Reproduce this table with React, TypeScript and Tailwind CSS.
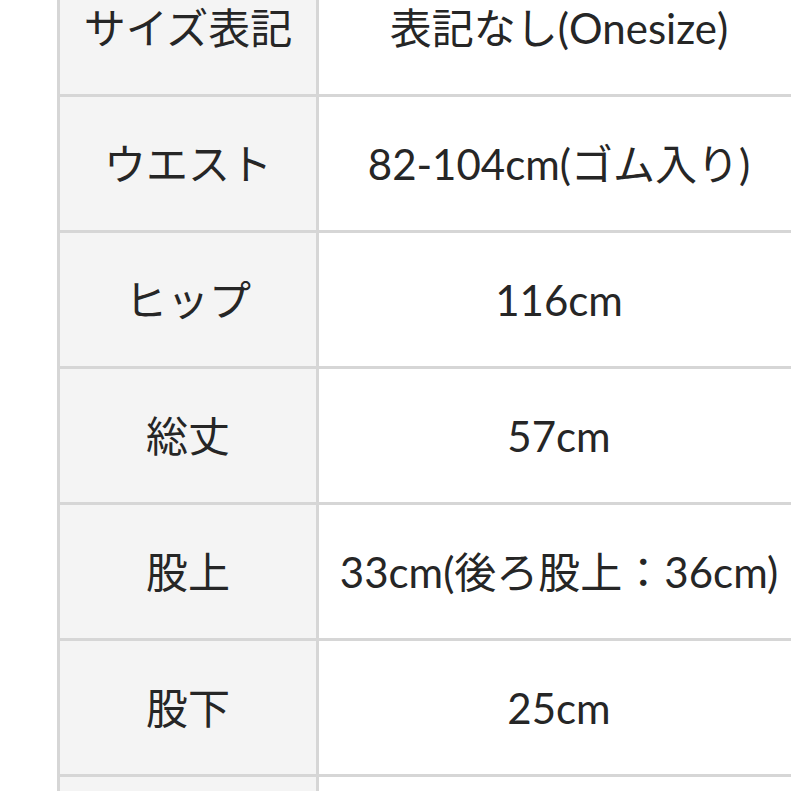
const rows: [string, string][] = [
  ['サイズ表記', '表記なし(Onesize)'],
  ['ウエスト', '82-104cm(ゴム入り)'],
  ['ヒップ', '116cm'],
  ['総丈', '57cm'],
  ['股上', '33cm(後ろ股上：36cm)'],
  ['股下', '25cm'],
  ['', ''],
]

export default function App() {
  return (
    <div className="w-[791px] h-[791px] overflow-hidden bg-white">
      <div
        className="pl-[57px] -mt-[42px] text-[#262626]"
        style={{ fontFamily: 'Lato, "Noto Sans CJK JP", sans-serif' }}
      >
        <table className="border-collapse w-[742px] table-fixed">
          <colgroup>
            <col className="w-[259px]" />
            <col className="w-[483px]" />
          </colgroup>
          <tbody>
            {rows.map(([label, value], i) => (
              <tr key={i} className="h-[136px]">
                <td className="border-[3px] border-[#d6d6d6] bg-[#f4f4f4] text-center align-middle text-[42px] leading-none">
                  {label}
                </td>
                <td className="border-[3px] border-[#d6d6d6] bg-white text-center align-middle text-[42px] leading-none whitespace-nowrap">
                  {value}
                </td>
              </tr>
            ))}
          </tbody>
        </table>
      </div>
    </div>
  )
}
